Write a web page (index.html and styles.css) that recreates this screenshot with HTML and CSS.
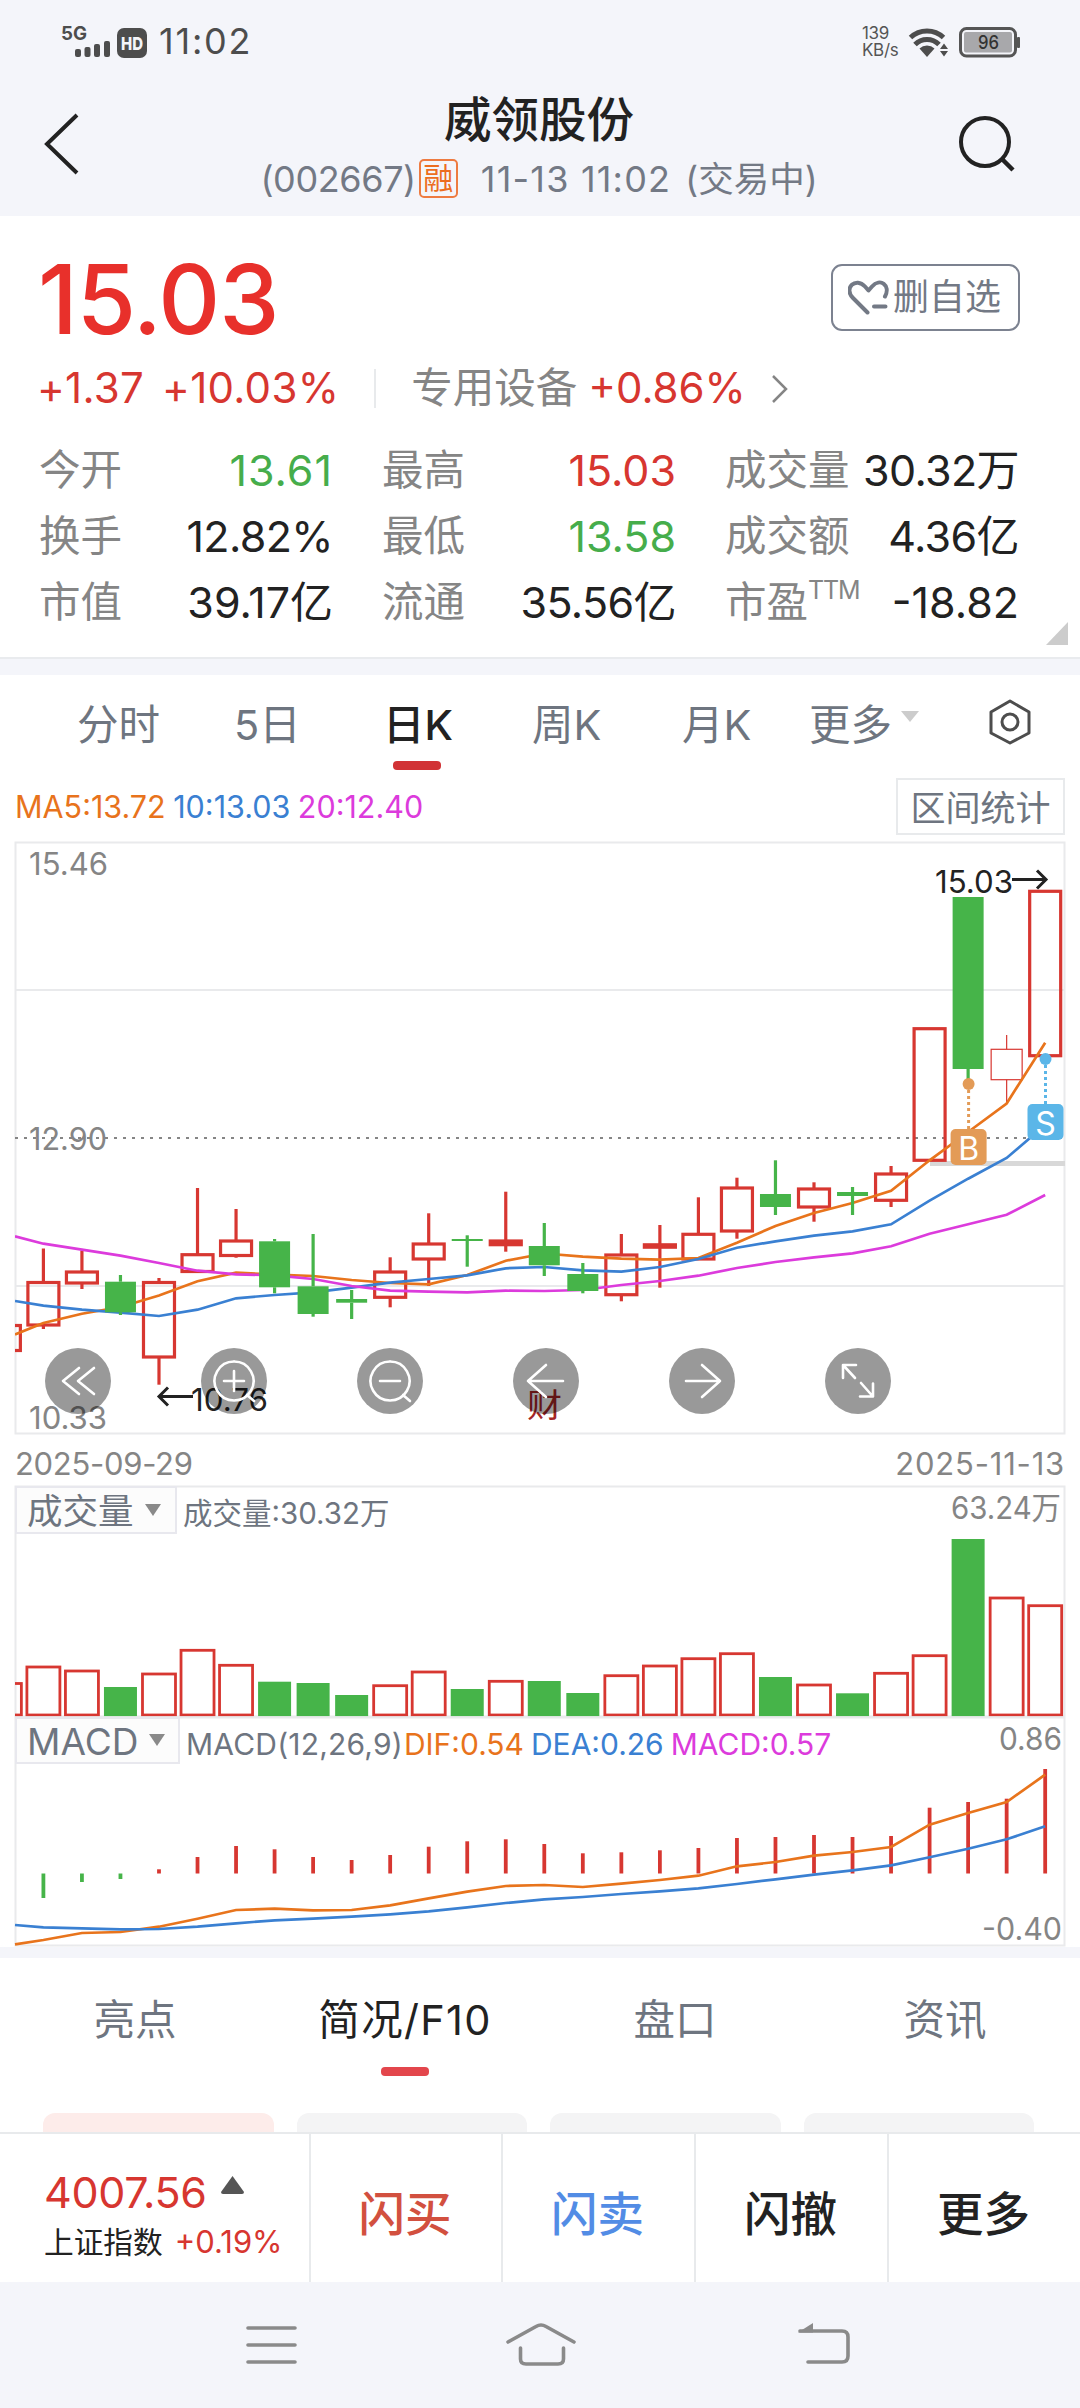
FILE: index.html
```html
<!DOCTYPE html>
<html lang="zh-CN">
<head>
<meta charset="utf-8">
<title>威领股份 002667</title>
<link rel="stylesheet" href="styles.css">
</head>
<body>
<header class="top">
  <div class="status">
    <svg class="status-left" width="90" height="48" viewBox="60 17 90 48">
      <text x="61" y="39" font-size="19" font-weight="700" textLength="26" lengthAdjust="spacingAndGlyphs" fill="#4d4d4d">5G</text>
      <g fill="#4d4d4d"><rect x="75" y="48" width="6" height="8" rx="2"/><rect x="84.500" y="46" width="6" height="10" rx="2"/><rect x="94" y="43" width="6" height="13" rx="2"/><rect x="104" y="40" width="6" height="16" rx="2"/><rect x="117" y="27" width="30" height="30" rx="7"/></g>
      <text x="121" y="48.500" font-size="18" font-weight="800" textLength="22" lengthAdjust="spacingAndGlyphs" fill="#f4f5fa">HD</text>
    </svg>
    <span class="clock">11:02</span>
    <span class="speed"><span>139</span><span>KB/s</span></span>
    <svg class="status-right" width="112" height="36" viewBox="909 24 112 36">
      <g fill="none" stroke="#4d4d4d" stroke-width="5"><path d="M911.500 37.500a24 24 0 0 1 33 0"/><path d="M916 44.500a17 17 0 0 1 24 0"/></g>
      <path d="M920.500 48.500a11 11 0 0 1 15 0l-7.500 8.500z" fill="#4d4d4d"/>
      <path d="M945 43.500l4 5.500h-8zM941 51h8l-4 5.500z" fill="#4d4d4d"/>
      <rect x="961.500" y="28.500" width="55" height="27.500" rx="6" fill="#f4f5fa" stroke="#555" stroke-width="3"/>
      <rect x="965" y="32" width="48" height="20.500" rx="2" fill="#a8a8ab"/>
      <rect x="1018" y="37" width="3" height="11" rx="1" fill="#555"/>
      <text x="979" y="49" font-size="18.500" font-weight="500" textLength="21" lengthAdjust="spacingAndGlyphs" fill="#333">96</text>
    </svg>
  </div>
  <div class="titlebar">
    <svg width="40" height="66" viewBox="42 111 40 66"><path d="M77 115L47 144L77 173" fill="none" stroke="#222" stroke-width="4"/></svg>
    <div class="title">
      <h1>威领股份</h1>
      <p><span class="code">(002667)</span><i class="tag">融</i><span class="date">11-13 11:02</span><span class="state">(交易中)</span></p>
    </div>
    <svg class="search" width="60" height="60" viewBox="956 113 60 60"><circle cx="985" cy="142" r="24" fill="none" stroke="#222" stroke-width="4"/><path d="M1002 159L1013 170" stroke="#222" stroke-width="4.500"/></svg>
  </div>
</header>

<section class="quote">
  <div class="price-row">
    <strong class="price">15.03</strong>
    <div class="fav">
      <svg width="42" height="36" viewBox="848 279 42 36"><path d="M867.500 311.500L853 297C843 287 856 275.500 865 285.500L868.500 289.500L872 285.500C880 276.500 891 284 885 295.500M874 305.500H885.500" fill="none" stroke="#737985" stroke-width="4" stroke-linecap="round" stroke-linejoin="round"/></svg>
      <span>删自选</span>
    </div>
  </div>
  <div class="change-row">
    <span class="chg red">+1.37</span><span class="pct red">+10.03%</span><i class="vline"></i><span class="sector">专用设备</span><span class="spct red">+0.86%</span>
    <svg width="18" height="30" viewBox="773 371 18 30"><path d="M775 373L788 386L775 399" fill="none" stroke="#858585" stroke-width="2.500"/></svg>
  </div>
  <div class="stats">
    <div><label>今开</label><b class="green wide">13.61</b></div><div><label>最高</label><b class="red">15.03</b></div><div><label>成交量</label><b class="tight">30.32万</b></div>
    <div><label>换手</label><b class="tight">12.82%</b></div><div><label>最低</label><b class="green">13.58</b></div><div><label>成交额</label><b class="tight">4.36亿</b></div>
    <div><label>市值</label><b>39.17亿</b></div><div><label>流通</label><b class="tight">35.56亿</b></div><div><label>市盈<sup>TTM</sup></label><b>-18.82</b></div>
  </div>
  <svg class="corner" width="22" height="23" viewBox="0 0 22 23"><path d="M22 0V23H0z" fill="#ccc"/></svg>
</section>

<nav class="periods">
  <span>分时</span><span>5日</span><span class="on">日K</span><span>周K</span><span>月K</span><span class="more">更多<i></i></span>
  <svg width="44" height="48" viewBox="989 698 44 48"><path d="M1011 701L1030 712V733L1011 743L992 733V712z" fill="none" stroke="#4d4d4d" stroke-width="3" stroke-linejoin="round"/><circle cx="1011" cy="722" r="8" fill="none" stroke="#4d4d4d" stroke-width="3"/></svg>
</nav>
<div class="ma-row">
  <span class="orange">MA5:13.72</span><span class="blue">10:13.03</span><span class="purple">20:12.40</span><button>区间统计</button>
</div>

<section class="kline">
  <svg id="kline" width="1080" height="600" viewBox="0 840 1080 600"></svg>
  <div class="tools">
    <svg viewBox="-33 -33 66 66"><circle r="33"/><path d="M1 -13L-15 0L1 13M16 -13L0 0L16 13"/></svg>
    <svg viewBox="-33 -33 66 66"><circle r="33"/><path d="M0 -19.500a19.500 19.500 0 1 0 .1 0M-10 0H10M0 -10V10M13 14L20 20"/></svg>
    <svg viewBox="-33 -33 66 66"><circle r="33"/><path d="M0 -19.500a19.500 19.500 0 1 0 .1 0M-10 0H10M13 14L20 20"/></svg>
    <svg viewBox="-33 -33 66 66"><circle r="33"/><path d="M17 0H-18M0 -16L-18 0L0 16"/></svg>
    <svg viewBox="-33 -33 66 66"><circle r="33"/><path d="M-16 0H18M0 -16L18 0L0 16"/></svg>
    <svg viewBox="-33 -33 66 66"><circle r="33"/><path d="M-2 -16H-15V-3M-14.500 -15.500L-3 -3M2 15.500H15V2.500M14.500 15L3 2"/></svg>
  </div>
</section>
<div class="dates"><span>2025-09-29</span><span class="end">2025-11-13</span></div>

<section class="panel vol">
  <svg id="volume" width="1080" height="232" viewBox="0 1485 1080 232"></svg>
  <div class="legend"><span class="select">成交量<i></i></span><span class="vtext">成交量:30.32万</span></div>
</section>
<section class="panel macd">
  <svg id="macd" width="1080" height="230" viewBox="0 1717 1080 230"></svg>
  <div class="legend"><span class="select m">MACD<i></i></span><span class="mtext">MACD(12,26,9)</span><span class="dif orange">DIF:0.54</span><span class="dea blue">DEA:0.26</span><span class="mval purple">MACD:0.57</span></div>
</section>

<nav class="tabs"><span>亮点</span><span class="on">简况/F10</span><span>盘口</span><span>资讯</span></nav>
<div class="cards"><i class="hot"></i><i></i><i></i><i></i></div>
<footer class="actions">
  <div class="index"><p class="idx">4007.56<svg width="23" height="18" viewBox="0 0 23 18"><path d="M11.500 0L23 16Q23 18 21 18H2Q0 18 0 16z" fill="#555"/></svg></p><p class="idn">上证指数<span class="red">+0.19%</span></p></div>
  <span class="buy">闪买</span><span class="sell">闪卖</span><span>闪撤</span><span>更多</span>
</footer>
<div class="sysnav">
  <svg width="1080" height="126" viewBox="0 2282 1080 126"><g fill="none" stroke="#8a8a8a" stroke-width="3.600" stroke-linecap="round"><path d="M248 2328H295M248 2345H295M248 2362H295"/><path d="M508 2342L536 2326.500Q541 2323.500 546 2326.500L574 2342M520.500 2348V2359Q520.500 2364 526 2364H558Q563.500 2364 563.500 2359V2348"/><path d="M800 2331H842Q848 2331 848 2337V2356Q848 2362 842 2362H808"/></g><path d="M798 2332.500L813 2323V2332.500z" fill="#8a8a8a"/></svg>
</div>
<script src="charts.js"></script>
</body>
</html>
```
FILE: styles.css
```css
* { box-sizing: border-box; margin: 0; padding: 0; }
body { width: 1080px; height: 2408px; background: #fff; color: #222; font-family: Inter, "Noto Sans CJK SC", sans-serif; line-height: 1.2; overflow: hidden; }
svg { display: block; flex: none; }
span, b, label, strong { white-space: nowrap; }
i { font-style: normal; }
.red { color: #d73630; }
.green { color: #46ad4b; }
.orange { color: #e8731c; }
.blue { color: #3a80d2; }
.purple { color: #dc3bdc; }

.top { height: 216px; background: #f4f5fa; }
.status { height: 84px; display: flex; align-items: center; padding: 0 60px 0 60px; }
.clock { margin-left: 9px; font-size: 36px; color: #4d4d4d; letter-spacing: 1.8px; }
.speed { margin-left: auto; margin-right: 10px; width: 36px; display: flex; flex-direction: column; font-size: 17px; line-height: 17px; color: #555; letter-spacing: -.3px; }
.titlebar { height: 132px; display: flex; justify-content: space-between; padding: 0 64px 0 42px; }
.titlebar > svg { margin-top: 27px; }
.titlebar .search { margin-top: 29px; }
.title { flex: 1; padding-left: 40px; display: flex; flex-direction: column; align-items: center; }
h1 { font-size: 47.500px; line-height: 71px; font-weight: 500; }
.title p { display: flex; align-items: center; height: 56px; margin-top: -3px; font-size: 36px; color: #737985; }
.code { letter-spacing: -.4px; }
.date { letter-spacing: 1.2px; }
.tag { width: 39px; height: 39px; margin: -4px 23px 0 3px; border: 2px solid #ee7b41; border-radius: 5px; color: #ec6d20; font-size: 30px; line-height: 35px; text-align: center; }
.state { margin-left: 14px; font-size: 35.500px; }

.quote { position: relative; height: 459px; border-bottom: 16px solid #f4f5fa; box-shadow: inset 0 -2px #e9ebee; }
.price-row { height: 130px; padding: 0 60px 0 38px; display: flex; justify-content: space-between; }
.price { font-size: 96px; line-height: 166px; font-weight: 500; color: #e8302b; letter-spacing: -1px; }
.fav { display: flex; align-items: center; width: 189px; height: 67px; margin-top: 48px; padding-left: 15px; gap: 3px; border: 2px solid #7c8290; border-radius: 11px; color: #737985; font-size: 36px; }
.change-row { display: flex; align-items: center; height: 86px; padding: 0 0 1px 37px; font-size: 42px; letter-spacing: .3px; }
.pct { margin-left: 18px; }
.vline { width: 2px; height: 39px; margin: 0 35px 0 35px; background: #e8eaec; }
.sector { font-size: 41.500px; letter-spacing: 0; color: #858585; }
.spct { margin: 0 25px 0 11px; letter-spacing: 0; }
.stats { display: grid; grid-template-columns: 294px 294px 294px; grid-auto-rows: 66px; column-gap: 49px; padding: 6px 0 0 39px; }
.stats div { display: flex; align-items: center; justify-content: space-between; }
.stats label { font-size: 41.500px; color: #858585; }
.stats sup { font-size: 25px; vertical-align: 18px; line-height: 0; letter-spacing: -1.2px; }
.stats b { font-size: 43px; font-weight: 400; }
.stats .tight { letter-spacing: -.6px; }
.stats .wide { letter-spacing: 1px; }
.corner { position: absolute; right: 12px; bottom: 14px; }

.periods { height: 101px; display: flex; align-items: center; padding-left: 77px; font-size: 41.500px; color: #6e7580; }
.periods svg { margin-top: -8px; }
.periods span { position: relative; line-height: 101px; width: 150px; }
.periods span:nth-child(1) { width: 157px; }
.periods span:nth-child(3) { width: 148px; }
.periods span:nth-child(5) { width: 127px; }
.periods .more { width: 179px; display: flex; align-items: center; }
.more i { margin: -18px 0 0 9px; border: 9px solid transparent; border-top: 11px solid #ccc; border-bottom: 0; }
.on { color: #222; font-weight: 500; }
.periods .on { margin-left: -1px; margin-right: 1px; }
.periods .on::after { content: ""; position: absolute; left: 10px; bottom: 6px; width: 48px; height: 9px; border-radius: 4px; background: #d13235; }
.ma-row { height: 64px; display: flex; align-items: center; padding: 0 15px 4px 15px; font-size: 30.500px; }
.ma-row span { margin: 3px 7.500px 0 0; }
.ma-row button { margin: 0 0 0 auto; width: 169px; height: 57px; border: 2px solid #e8eaec; background: #fff; color: #6e7580; font: 35px "Noto Sans CJK SC", sans-serif; line-height: 50px; }
.kline { position: relative; height: 600px; }
.tools { position: absolute; left: 45px; top: 508px; display: flex; gap: 90px; }
.tools svg { width: 66px; height: 66px; }
.tools circle { fill: rgba(0,0,0,.4); }
.tools path { fill: none; stroke: #fff; stroke-width: 2.600; stroke-linecap: round; stroke-linejoin: round; }
.dates { height: 45px; display: flex; justify-content: space-between; padding: 0 15px; line-height: 48px; font-size: 31px; letter-spacing: -.3px; color: #858585; }
.dates .end { letter-spacing: .8px; }
.panel { position: relative; }
.vol { height: 232px; }
.macd { height: 241px; border-bottom: 11px solid #f4f5fa; }
.legend { position: absolute; inset: 0 auto auto 15px; display: flex; align-items: center; font-size: 30px; color: #6e7580; }
.vol .legend { top: 1px; }
.select { display: flex; align-items: center; width: 162px; height: 48px; padding: 3px 0 0 10px; border: 2px solid #e8e8ee; background: #fcfcfc; font-size: 35.500px; line-height: 48px; }
.select i { margin: -4px 0 0 11px; border: 8.500px solid transparent; border-top: 12px solid #8a8a8a; border-bottom: 0; }
.select.m { width: 165px; height: 47px; font-size: 37px; line-height: 46px; }
.vtext { margin: 7px 0 0 6px; font-size: 29.500px; }
.mtext { margin: 6px 0 0 6px; letter-spacing: .2px; }
.dif, .dea, .mval { margin-top: 6px; }
.dif { margin-left: 1px; }
.dea, .mval { margin-left: 7px; }

.tabs { height: 155px; display: grid; grid-template-columns: repeat(4, 1fr); text-align: center; font-size: 41.500px; line-height: 124px; color: #6e7580; }
.tabs span { position: relative; }
.tabs .on { letter-spacing: 1.3px; font-weight: 400; }
.tabs .on::after { content: ""; position: absolute; left: 111px; top: 109px; width: 48px; height: 9px; border-radius: 4px; background: #e3464c; }
.cards { height: 19px; padding: 0 46px 0 43px; display: flex; gap: 23px; }
.cards i { flex: 1; background: #f4f4f5; border-radius: 12px 12px 0 0; }
.cards .hot { background: #fdecea; }
.actions { height: 150px; border-top: 2px solid #e8eaec; display: grid; grid-template-columns: 311px 192px 193px 193px 191px; grid-template-rows: 148px; background: #fff; }
.actions > * { border-right: 2px solid #e8eaec; }
.actions > :last-child { border: 0; }
.actions > span { padding: 6px 2px 0 0; font-size: 46.500px; line-height: 148px; height: 148px; font-weight: 500; text-align: center; }
.actions .buy { color: #d2503f; }
.actions .sell { color: #528ce5; }
.index { padding: 32px 0 0 44px; }
.idx { display: flex; font-size: 43px; line-height: 52px; letter-spacing: -.3px; color: #d73630; }
.idx svg { margin: 10px 0 0 14px; }
.idn { font-size: 29.700px; line-height: 48px; white-space: nowrap; }
.idn span { margin-left: 12px; font-size: 31px; }
.sysnav { height: 126px; background: #f4f5fa; }
```
FILE: charts.js
```js
const RED = '#d73731', GREEN = '#46b449', ORANGE = '#e8741c', BLUE = '#3a80d2', PURPLE = '#dc3bdc';
const X = i => 43.4 + 38.53 * i;
const line = (x1, y1, x2, y2, c, w, more = '') => `<line x1="${x1}" y1="${y1}" x2="${x2}" y2="${y2}" stroke="${c}" stroke-width="${w}" ${more}/>`;
const poly = (ys, c) => `<polyline fill="none" stroke="${c}" stroke-width="2.7" points="${ys.map((y, i) => (i ? X(i - 1) : 15) + ',' + y).join(' ')}"/>`;
const text = (x, y, s, len, c = '#858585', size = 31) => `<text x="${x}" y="${y}" font-size="${size}" fill="${c}" textLength="${len}" lengthAdjust="spacingAndGlyphs">${s}</text>`;
const frame = (y1, y2) => `<path d="M15.500 ${y1}H1064.500V${y2}H15.500z" fill="none" stroke="#e9eaec" stroke-width="2"/>`;
const clip = (id, y, h, s) => `<clipPath id="${id}"><rect x="15" y="${y}" width="1050" height="${h}"/></clipPath><g clip-path="url(#${id})">${s}</g>`;

// direction, body top, body bottom, high, low
const candles = [
  ['r',1325.5,1350.5],['r',1282.5,1325,1248.5,1329],['r',1272,1283,1250.7,1289],['g',1281.7,1312.3,1275,1315],['r',1282.5,1357,1278,1384.7],
  ['r',1254.7,1271.5,1188],['r',1241,1255.5,1209,1257.7],['g',1241.3,1287.3,1239,1293.3],['g',1286.3,1314,1234,1316.7],['g',1299,1302.7,1290,1319],
  ['r',1272,1297.3,1257.3,1307.3],['r',1244,1259,1213.3,1286],['g',1239,1241,1235.3,1266.7],['f',1241,1244.7,1191.7,1251.7],['g',1246,1265.3,1223,1276],
  ['g',1274,1291,1263,1293.3],['r',1255,1294.7,1234,1301.3],['f',1244.8,1247.2,1225,1287.7],['r',1234.3,1259,1197.3],['r',1188,1231,1177.7,1238.7],
  ['g',1194,1207,1160.3,1215],['r',1189,1207,1182.3,1221.7],['g',1192,1196,1187,1215],['r',1174,1200.3,1166,1207],['r',1028.7,1160.3],
  ['g',897,1069,897,1080],['t',1049.3,1079.7,1035,1103],['r',891.3,1055.7]
];
const ma5 = [1334.5,1323,1313.7,1307,1295.5,1281.3,1272.7,1274.5,1276,1280,1283,1284.3,1275,1260.7,1253.5,1256.7,1258.7,1259.7,1258,1242.7,1226,1213,1203,1190.7,1160.3,1132,1103.5,1042.7];
const ma10 = [1301,1305.7,1309.7,1312.7,1316,1309.7,1298.3,1295,1292.3,1287.7,1282.7,1279,1275.3,1268.3,1267,1270.3,1271.7,1267,1259,1247.7,1241.3,1235.7,1231.3,1224.3,1200.7,1178.7,1158,1125];
const ma20 = [1236.3,1243.7,1249.7,1255.7,1263,1270.7,1274.3,1275.3,1279,1286,1290.7,1291.7,1292.3,1290.7,1291,1290,1285,1281,1275.7,1268,1262,1257.3,1253.3,1246.3,1233.7,1224.3,1214.7,1195];

function candle([d, top, bottom, high, low], n) {
  const x = X(n - 1), c = d === 'g' ? GREEN : RED, w = d === 't' ? 1.2 : 3.2;
  let s = '';
  if (high) s += line(x, high, x, top, c, w);
  if (low) s += line(x, bottom, x, low, c, w);
  return s + (d === 'g'
    ? `<rect x="${x - 15.5}" y="${top}" width="31" height="${bottom - top}" fill="${c}"/>`
    : `<rect x="${x - 15.5}" y="${top}" width="31" height="${bottom - top}" fill="${d === 'f' ? c : 'none'}" stroke="${c}" stroke-width="${w}"/>`);
}
// green bodies cover the averages, outlined ones stay see-through
const solid = candles.map((c, n) => c[0] === 'g' ? candle(c, n) : '').join('');
const open = candles.map((c, n) => c[0] !== 'g' ? candle(c, n) : '').join('');
const pin = (x, dot, top, c, s) => line(x, dot, x, top, c, 3, 'stroke-dasharray="3 3"') + `<circle cx="${x}" cy="${dot}" r="6" fill="${c}"/><rect x="${x - 18}" y="${top}" width="36" height="36" rx="5" fill="${c}"/><text x="${x}" y="${top + 31}" text-anchor="middle" font-size="32" fill="#fff">${s}</text>`;
const arrow = (x, y, d) => `<path d="M${x} ${y}h${34 * d}m${-9 * d} -9l${9 * d} 9l${-9 * d} 9" fill="none" stroke="#222" stroke-width="3"/>`;

document.getElementById('kline').innerHTML = frame(842.5, 1433.5)
  + line(15, 990, 1065, 990, '#e9eaec', 2) + line(15, 1286, 1065, 1286, '#e9eaec', 2)
  + line(15, 1138, 1065, 1138, '#858585', 2, 'stroke-dasharray="3 6"')
  + line(930, 1163.5, 1065, 1163.5, '#d8d8d8', 5)
  + clip('k', 843, 590, open + poly(ma5, ORANGE) + poly(ma10, BLUE) + poly(ma20, PURPLE) + solid)
  + pin(968.6, 1084, 1129, '#e39b57', 'B') + pin(1045.5, 1059, 1104, '#5bb6e8', 'S')
  + text(29, 875, '15.46', 79) + text(29, 1149.5, '12.90', 78) + text(29, 1428.5, '10.33', 78)
  + text(935, 892.5, '15.03', 78, '#222') + arrow(1012, 879.5, 1)
  + text(191, 1410.5, '10.76', 77, '#222') + arrow(193, 1396.5, -1)
  + text(527, 1417, '财', 35, '#a52626', 33);

const volumes = [1683.5,1667,1671,-1687,1674,1650.3,1665.3,-1681.7,-1683,-1695,1685.7,1672,-1689,1681.3,-1681,-1693,1675.7,1666,1658.7,1653.7,-1677,1685,-1693.3,1673.3,1655.7,-1539,1598,1605.7];
document.getElementById('volume').innerHTML = frame(1486.5, 1716.5) + clip('v', 1486, 230.3, volumes.map((v, n) => {
  const x = X(n - 1), y = Math.abs(v);
  return v < 0 ? `<rect x="${x - 16.5}" y="${y}" width="33" height="${1716.3 - y}" fill="${GREEN}"/>`
    : `<rect x="${x - 16.5}" y="${y}" width="33" height="${1715 - y}" fill="none" stroke="${RED}" stroke-width="2.8"/>`;
}).join('')) + text(951, 1519, '63.24万', 110);

const bars = [1898,1882,1879,1869.3,1857,1846,1849.3,1857,1860,1855,1846.7,1841.3,1839.3,1844,1853.3,1852.3,1850.3,1848,1838,1837,1835,1837,1836,1807.7,1802,1798.7,1769];
const dif = [1944.3,1940,1933,1932,1926.7,1918.7,1910,1908.7,1910.3,1910,1905.3,1898.3,1891.7,1886,1885,1887,1883.7,1880,1875.7,1866.3,1862,1855.7,1852,1847,1824.7,1813,1802,1774.7];
const dea = [1925,1927.3,1928.3,1929.3,1929,1926.7,1923.3,1920.3,1918.7,1916.7,1914.3,1911.3,1907.3,1903,1899.3,1897,1894,1891.3,1888.3,1884,1879.3,1874.7,1870.3,1865.3,1857.3,1848.7,1839.3,1826.3];
document.getElementById('macd').innerHTML = frame(1717.5, 1945.5)
  + bars.map((y, i) => line(X(i), 1873.5, X(i), y, i < 3 ? GREEN : RED, 3.8)).join('')
  + poly(dif, ORANGE) + poly(dea, BLUE)
  + text(999, 1749.5, '0.86', 63) + text(982, 1939.5, '-0.40', 80);
```
